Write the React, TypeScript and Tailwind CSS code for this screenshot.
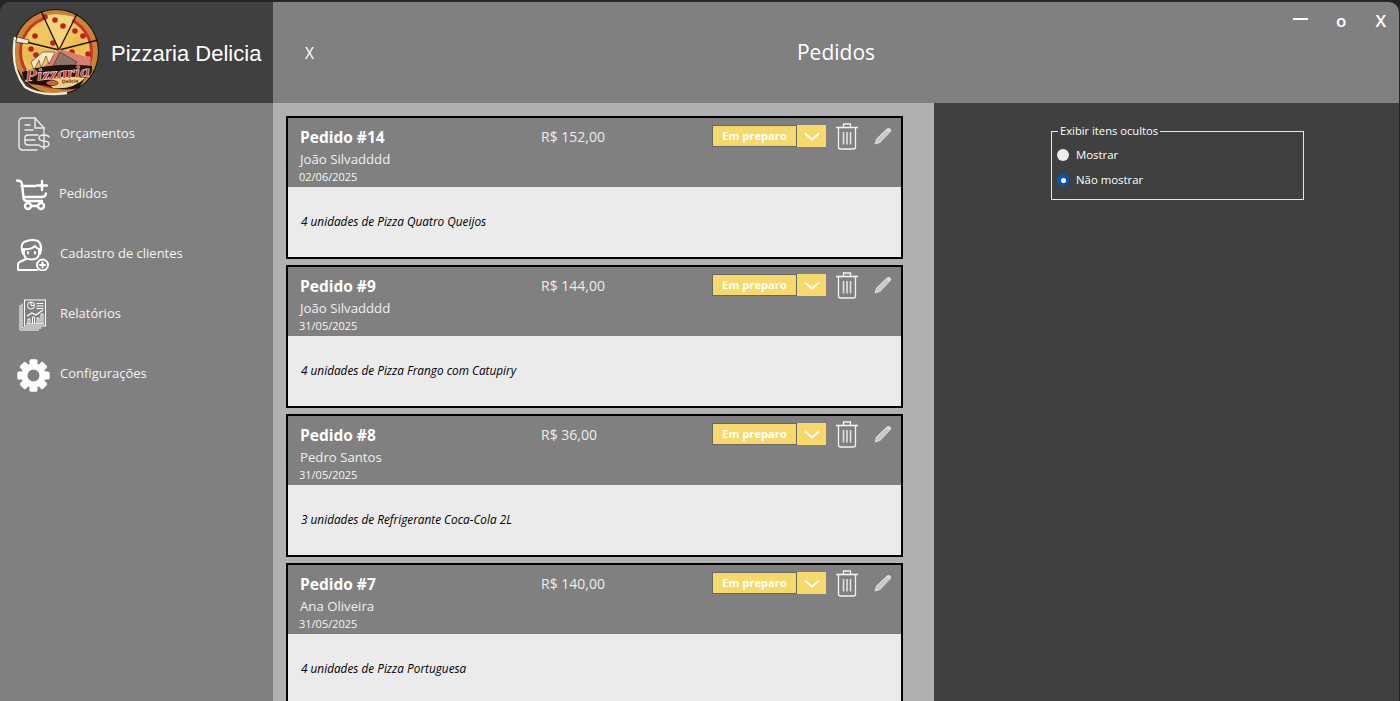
import React from "react";

const font = "font-['Open_Sans','Noto_Sans',sans-serif]";

function PizzaLogo() {
  const pep = [[62,26],[54,20],[74,31],[82,36],[34,36],[52,43],[35,55],[34,62],[71,52],[87,54],[44,17],[30,49]];
  return (
    <svg width="88" height="90" viewBox="10 8 88 90" className="shrink-0">
      <circle cx="55" cy="52" r="43" fill="#1a1110" />
      <circle cx="55" cy="52" r="42" fill="#c98433" />
      <circle cx="55" cy="52" r="37" fill="#c9342a" />
      <circle cx="55" cy="52" r="34" fill="#efc75e" />
      <path d="M43 16 Q55 12 73 17 L58 47 Z" fill="#f3d67c" />
      <path d="M21 46 L52 50 L36 70 Q22 64 21 46 Z" fill="#e9bb50" />
      <path d="M79 30 Q88 44 84 54 L64 50 Z" fill="#eec052" />
      {pep.map(([x, y], i) => (
        <circle key={i} cx={x} cy={y} r="2.800" fill="#b8241f" />
      ))}
      <g stroke="#1c1210" strokeWidth="1.300">
        <line x1="58" y1="50" x2="40" y2="11" />
        <line x1="58" y1="50" x2="76" y2="14" />
        <line x1="58" y1="50" x2="97" y2="40" />
        <line x1="58" y1="50" x2="25" y2="42" />
      </g>
      <path d="M58 49 L90 58 L88 72 L50 76 L42 68 Z" fill="#d9806a" />
      <path d="M59 52 L76 62 L66 74 L50 70 Z" fill="#8d7469" stroke="#3a2420" strokeWidth="0.600" />
      <path d="M30 62 L33 70 L38 60 L40 68 L45 56 L48 64 L54 52 L42 52 Z" fill="#f5e7c0" stroke="#2a1a14" strokeWidth="0.500" />
      <path d="M14 37 Q9 68 24 87 Q40 97 66 93" fill="none" stroke="#f5ecd8" strokeWidth="2.300" />
      <path d="M16 37 L28 40 L27 44 L15 42 Z" fill="#f5ecd8" stroke="#1a1110" strokeWidth="0.600" />
      <path d="M21 72 Q50 62 91 66 Q92 76 84 78 L78 88 Q60 92 46 86 L30 84 Q21 80 21 72 Z" fill="#1d1412" />
      <path d="M46 82 Q60 74 84 78 Q72 90 52 88 Z" fill="#f0d27a" />
      <ellipse cx="51" cy="83" rx="6" ry="2.600" fill="#d0653a" stroke="#1a1110" strokeWidth="0.600" />
      <text
        x="24"
        y="79"
        textLength="65"
        lengthAdjust="spacingAndGlyphs"
        transform="rotate(-4 56 75)"
        className="font-['Liberation_Serif',serif] italic font-bold text-[17px]"
        fill="#c9403a"
        stroke="#f5dccf"
        strokeWidth="0.500"
      >
        Pizzaria
      </text>
      <text x="61" y="83" transform="rotate(-3 66 81)" className="font-['Liberation_Sans',sans-serif] font-bold text-[5px]" fill="#4a2417">
        Delicia
      </text>
    </svg>
  );
}

const IconBudget = () => (
  <svg width="34" height="36" viewBox="0 0 34 36" fill="none" stroke="#ececec" strokeWidth="1.400" strokeLinecap="round" strokeLinejoin="round">
    <path d="M17 1H5Q1 1 1 5V29Q1 33 5 33H19" />
    <path d="M17 1L26 11V14" />
    <path d="M17 2V11H26" />
    <path d="M7 8H12M7 13H15" />
    <path d="M20 18H10Q7 18 7 20.500V25.500Q7 28 10 28H20" />
    <path d="M7 23H17" />
    <path d="M31 20Q30 18 26 18Q21 18 21 21Q21 23.500 26 24Q31 24.500 31 27Q31 30 26 30Q22 30 21 28" />
    <path d="M26 15.500V32" />
  </svg>
);

const IconCart = () => (
  <svg width="32" height="32" viewBox="0 0 32 32" fill="none" stroke="#fff" strokeWidth="2.400" strokeLinecap="round" strokeLinejoin="round">
    <path d="M1 1.500L4 2Q5.500 2.500 6 5L7.500 19Q8 22 11 22H26" />
    <path d="M5.500 7H19" />
    <path d="M8 18H26Q29.500 18 30 14.500" />
    <path d="M26 2V11M21 6.500H31" />
    <circle cx="12" cy="27" r="3" />
    <circle cx="25" cy="27" r="3" />
    <path d="M15 27H22" />
  </svg>
);

const IconClient = () => (
  <svg width="32" height="32" viewBox="0 0 32 32" fill="none" stroke="#fff" strokeWidth="2" strokeLinecap="round" strokeLinejoin="round">
    <path d="M6 15Q2 3 10 2Q15 0 21 2Q26 6 23 15" />
    <path d="M6 10Q14 11 18 7Q20 10 23 10" />
    <path d="M7 10V14Q7 20.500 14.500 20.500Q22 20.500 22 14V10" />
    <path d="M11 13V14.500M18 13V14.500" />
    <path d="M9 20L2.500 23Q1 24 1 26V31H20" />
    <circle cx="25.500" cy="26" r="5.500" />
    <path d="M25.500 23.500V28.500M23 26H28" />
  </svg>
);

const IconReports = () => (
  <svg width="28" height="32" viewBox="0 0 28 32" fill="none" stroke="#fff" strokeWidth="1">
    <path d="M1 6V31H20" />
    <path d="M3 4.500V29H22.500" />
    <rect x="5.500" y="1" width="21" height="26" fill="#808080" />
    <circle cx="12" cy="6.500" r="3.500" />
    <path d="M12 3V6.500H15.500" />
    <path d="M17.500 4.500H24.500M17.500 7H24.500M17.500 9.500H24.500" />
    <path d="M8 17L13 14L17 16L24 11" strokeWidth="1.300" />
    <path d="M7 25H25" />
    <path d="M9 25V20H11V25M13.500 25V18H15.500V25M18 25V19H20V25M22 25V15H24V25" />
  </svg>
);

const IconGear = () => {
  const teeth = [0, 45, 90, 135, 180, 225, 270, 315];
  return (
    <svg width="33" height="33" viewBox="0 0 33 33">
      <g fill="#fff">
        {teeth.map((r) => (
          <rect key={r} x="12.500" y="0.300" width="8" height="9" rx="1.500" transform={`rotate(${r} 16.500 16.500)`} />
        ))}
      </g>
      <circle cx="16.500" cy="16.500" r="9" fill="none" stroke="#fff" strokeWidth="6" />
    </svg>
  );
};

const IconTrash = () => (
  <svg width="24" height="27" viewBox="0 0 24 27" fill="none" stroke="#f2f2f2" strokeWidth="1.300" className="shrink-0">
    <path d="M1 4.500H23" strokeWidth="1.600" />
    <path d="M8.500 4V1H15.500V4" />
    <path d="M3.500 5V24Q3.500 26 5.500 26H18.500Q20.500 26 20.500 24V5" />
    <path d="M8.500 9V21.500M12 9V21.500M15.500 9V21.500" strokeWidth="1.600" stroke="#e2e2e2" />
  </svg>
);

const IconPencil = () => (
  <svg width="18" height="18" viewBox="0 0 18 18" className="shrink-0">
    <path d="M0.500 17.500L2 12L13 1.500Q14.500 0.300 16.500 1.800Q18 3.500 16.500 5L6 16Z" fill="#dcdcdc" />
    <path d="M2.500 14.500L13.500 4" stroke="#9a9a9a" strokeWidth="0.800" />
    <path d="M4 15.500L15 5" stroke="#a8a8a8" strokeWidth="0.800" />
  </svg>
);

const nav = [
  { label: "Orçamentos", icon: <IconBudget />, x: "pl-[18px]", gap: "gap-[8px]" },
  { label: "Pedidos", icon: <IconCart />, x: "pl-[16px]", gap: "gap-[11px]" },
  { label: "Cadastro de clientes", icon: <IconClient />, x: "pl-[17px]", gap: "gap-[11px]" },
  { label: "Relatórios", icon: <IconReports />, x: "pl-[19px]", gap: "gap-[13px]" },
  { label: "Configurações", icon: <IconGear />, x: "pl-[17px]", gap: "gap-[10px]" },
];

const orders = [
  { id: 14, price: "R$ 152,00", client: "João Silvadddd", date: "02/06/2025", item: "4 unidades de Pizza Quatro Queijos" },
  { id: 9, price: "R$ 144,00", client: "João Silvadddd", date: "31/05/2025", item: "4 unidades de Pizza Frango com Catupiry" },
  { id: 8, price: "R$ 36,00", client: "Pedro Santos", date: "31/05/2025", item: "3 unidades de Refrigerante Coca-Cola 2L" },
  { id: 7, price: "R$ 140,00", client: "Ana Oliveira", date: "31/05/2025", item: "4 unidades de Pizza Portuguesa" },
];

function OrderCard({ o }: { o: (typeof orders)[number] }) {
  return (
    <div className="w-[617px] h-[143px] shrink-0 border-2 border-black flex flex-col">
      <div className="h-[69px] bg-[#808080] flex text-white">
        <div className="w-[239px] pl-[12px] pt-[8px] flex flex-col">
          <span className="text-[15.5px] leading-[22px] font-bold">Pedido #{o.id}</span>
          <span className="text-[13.2px] leading-[18px] mt-[2px] text-[#f0f0f0]">{o.client}</span>
          <span className="text-[11px] leading-[15px] mt-[1px] -ml-[1px] text-[#f5f5f5]">{o.date}</span>
        </div>
        <div className="w-[185px] pt-[9px] pl-[14px] text-[14px] leading-[20px] text-[#ededed]">{o.price}</div>
        <div className="flex items-start pt-[7px]">
          <div className="w-[85px] h-[22px] bg-[#f7d96b] border border-[#666] flex items-center justify-center text-[11.2px] font-bold text-white">
            Em preparo
          </div>
          <div className="w-[29px] h-[22px] bg-[#f7d96b] flex items-center justify-center">
            <svg width="18" height="9" viewBox="0 0 18 9" fill="none" stroke="#fff" strokeWidth="1.800">
              <path d="M2 1.500L9 7.500L16 1.500" />
            </svg>
          </div>
          <div className="ml-[9px] -mt-[2px]"><IconTrash /></div>
          <div className="ml-[15px] mt-[2px]"><IconPencil /></div>
        </div>
      </div>
      <div className="flex-1 bg-[#ebebeb] flex items-center pl-[13px] text-[11.8px] italic text-black">{o.item}</div>
    </div>
  );
}

function Radio({ label, checked }: { label: string; checked?: boolean }) {
  return (
    <div className="flex items-center h-[14px] gap-[7px]">
      {checked ? (
        <span className="w-[12px] h-[12px] rounded-full bg-[#0059b8] flex items-center justify-center">
          <span className="w-[5px] h-[5px] rounded-full bg-white" />
        </span>
      ) : (
        <span className="w-[12px] h-[12px] rounded-full bg-[#eeeeee]" />
      )}
      <span className="text-[11.4px] leading-[14px] text-white">{label}</span>
    </div>
  );
}

export default function App() {
  return (
    <div className={`w-[1400px] h-[701px] bg-[#252525] overflow-hidden pt-[2px] pr-[1px] ${font}`}>
      <div className="h-full rounded-t-[10px] overflow-hidden flex flex-col">
        <div className="h-[101px] shrink-0 flex">
          <div className="w-[273px] bg-[#404040] flex items-center pl-[11px] gap-[12px]">
            <PizzaLogo />
            <span className="text-[22px] text-white font-['Liberation_Sans',sans-serif] whitespace-nowrap mt-[1px]">Pizzaria Delicia</span>
          </div>
          <div className="flex-1 bg-[#808080] grid grid-cols-[1fr_auto_1fr] text-white">
            <div className="pl-[32px] pt-[41px] text-[15.5px] leading-[20px]">X</div>
            <div className="pt-[35px] text-[21px] leading-[30px]">Pedidos</div>
            <div className="flex justify-end items-start pt-[6px] pr-[13px] text-[17px] font-semibold leading-[26px]">
              <span className="w-[15px] h-[2px] bg-white mt-[10px] mr-[28px]" />
              <span className="mr-[29px]">o</span>
              <span>X</span>
            </div>
          </div>
        </div>
        <div className="flex-1 flex min-h-0">
          <nav className="w-[273px] bg-[#808080] flex flex-col pt-[2px]">
            {nav.map((n) => (
              <div key={n.label} className={`h-[60px] flex items-center ${n.x} ${n.gap} text-[13px] text-[#f4f4f4]`}>
                <span className="flex shrink-0">{n.icon}</span>
                <span className="pb-[3px]">{n.label}</span>
              </div>
            ))}
          </nav>
          <div className="w-[661px] bg-[#b0b0b0] pl-[13px] pt-[13px] flex flex-col gap-[6px] overflow-hidden">
            {orders.map((o) => (
              <OrderCard key={o.id} o={o} />
            ))}
          </div>
          <div className="flex-1 bg-[#404040] pt-[21px] pl-[117px]">
            <fieldset className="w-[253px] h-[76px] border border-[#e8e8e8] pl-[5px] pr-0">
              <legend className="text-[11.2px] leading-[14px] text-white px-[2px] ml-[1px]">Exibir itens ocultos</legend>
              <div className="flex flex-col gap-[11px] pt-[10px]">
                <Radio label="Mostrar" />
                <Radio label="Não mostrar" checked />
              </div>
            </fieldset>
          </div>
        </div>
      </div>
    </div>
  );
}
